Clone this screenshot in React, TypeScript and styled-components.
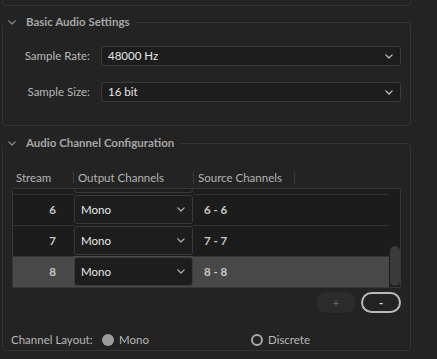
import React from 'react';
import styled, { createGlobalStyle } from 'styled-components';

const GlobalStyle = createGlobalStyle`
  html, body { margin: 0; padding: 0; background: #232323; }
  body {
    font-family: Lato, "Open Sans", "Liberation Sans", sans-serif;
    font-size: 11.5px;
    line-height: 16px;
    color: #b8b8b8;
    overflow: hidden;
  }
  * { box-sizing: border-box; }
`;

const Page = styled.div`
  width: 437px;
  height: 359px;
  overflow: hidden;
  background: #232323;
  padding-left: 2px;
`;

const Column = styled.div`
  width: 409px;
  display: flex;
  flex-direction: column;
`;

const PrevPanelEnd = styled.div`
  height: 6px;
  border: 1px solid #343434;
  border-top: none;
  border-radius: 0 0 4px 4px;
`;

const Section = styled.fieldset<{ $gap: number }>`
  margin: ${(p) => p.$gap}px 0 0;
  padding: 0;
  min-width: 0;
  border: 1px solid #343434;
  border-radius: 4px;
`;

const Legend = styled.legend`
  display: flex;
  align-items: center;
  gap: 10px;
  height: 16px;
  padding: 0 6px 0 5px;
  margin: 0;
  color: #a6a6a6;
  font-weight: 700;
`;

const Chevron = ({ color = '#8c8c8c' }: { color?: string }) => (
  <svg width={8} height={5} viewBox="0 0 8 5" fill="none">
    <path d="M0.8 0.8 L4 4 L7.2 0.8" stroke={color} strokeWidth="1.2" strokeLinecap="round" strokeLinejoin="round" />
  </svg>
);

const SettingsBody = styled.div`
  display: grid;
  grid-template-columns: 78px 300px;
  column-gap: 11px;
  row-gap: 16px;
  align-items: center;
  padding: 16px 9px 23px 9px;
`;

const FieldLabel = styled.span`
  text-align: right;
  color: #b8b8b8;
`;

const Select = styled.div<{ $h?: number }>`
  height: ${(p) => p.$h ?? 20}px;
  display: flex;
  align-items: center;
  justify-content: space-between;
  padding: 0 7px 0 6px;
  background: #1d1d1d;
  border: 1px solid #3a3a3a;
  border-radius: 3px;
  color: #e6e6e6;
`;

const SelectTail = styled.div`
  height: 4px;
  background: #1d1d1d;
  border: 1px solid #3a3a3a;
  border-top: none;
  border-radius: 0 0 3px 3px;
`;

const ChannelBody = styled.div`
  display: flex;
  flex-direction: column;
  padding: 17px 9px 0 9px;
`;

const HeaderRow = styled.div`
  display: flex;
  height: 20px;
`;

const HeaderCell = styled.div<{ $w: number }>`
  width: ${(p) => p.$w}px;
  display: flex;
  align-items: center;
  justify-content: space-between;
  padding-left: 4px;
  color: #b3b3b3;
  white-space: nowrap;
`;

const HeaderSep = styled.span`
  width: 1px;
  height: 12px;
  background: #3a3a3a;
`;

const TableBody = styled.div`
  display: grid;
  grid-template-columns: 1fr 11px;
  height: 100px;
  background: #1c1c1c;
  border: 1px solid #383838;
  border-radius: 2px;
`;

const Viewport = styled.div`
  display: flex;
  flex-direction: column;
  justify-content: flex-end;
  overflow: hidden;
`;

const Row = styled.div<{ $selected?: boolean; $h?: number }>`
  flex: none;
  display: grid;
  grid-template-columns: 61px 119px 1fr;
  height: ${(p) => p.$h ?? 31}px;
  background: ${(p) => (p.$selected ? '#484848' : '#1c1c1c')};
`;

const StreamCell = styled.div`
  display: flex;
  align-items: center;
  justify-content: flex-end;
  padding-right: 18px;
  border-top: 1px solid #333;
  font-weight: 700;
  color: #c8c8c8;
`;

const OutputCell = styled.div`
  padding-top: 1px;
`;

const SourceCell = styled.div`
  display: flex;
  align-items: center;
  padding-left: 11px;
  border-top: 1px solid #333;
  font-weight: 700;
  color: #c8c8c8;
`;

const ScrollTrack = styled.div`
  display: flex;
  flex-direction: column;
  justify-content: flex-end;
  align-items: center;
  padding: 0 0 1px;
`;

const Thumb = styled.div<{ $size: number }>`
  width: 10px;
  height: ${(p) => p.$size}px;
  border-radius: 5px;
  background: #3a3a3a;
`;

const ButtonRow = styled.div`
  display: flex;
  justify-content: flex-end;
  gap: 5px;
  margin-top: 4px;
`;

const PillButton = styled.button<{ $outlined?: boolean }>`
  width: 40px;
  height: 21px;
  border-radius: 11px;
  padding: 0;
  font-family: inherit;
  font-size: 11px;
  font-weight: 700;
  line-height: 1;
  background: ${(p) => (p.$outlined ? 'transparent' : '#2b2b2b')};
  border: ${(p) => (p.$outlined ? '2px solid #b9b9b9' : 'none')};
  color: ${(p) => (p.$outlined ? '#e6e6e6' : '#5c5c5c')};
`;

const LayoutRow = styled.div`
  display: grid;
  grid-template-columns: 91px 149px 1fr;
  align-items: center;
  height: 20px;
  margin-top: 17px;
  margin-left: -1px;
`;

const Option = styled.label`
  display: flex;
  align-items: center;
  gap: 5px;
  color: #b8b8b8;
`;

const Radio = styled.span<{ $checked?: boolean }>`
  width: 12px;
  height: 12px;
  border-radius: 50%;
  background: ${(p) => (p.$checked ? '#9c9c9c' : 'transparent')};
  border: ${(p) => (p.$checked ? 'none' : '2px solid #a8a8a8')};
`;

const ROW_H = 31;
const VIEW_H = 98;
const TOTAL_STREAMS = 8;
const visibleStreams = [6, 7, 8];

export default function App() {
  const thumb = Math.round((VIEW_H * VIEW_H) / (TOTAL_STREAMS * ROW_H)) + 1;
  return (
    <Page>
      <GlobalStyle />
      <Column>
        <PrevPanelEnd />
        <Section $gap={8}>
          <Legend>
            <Chevron />
            <span>Basic Audio Settings</span>
          </Legend>
          <SettingsBody>
            <FieldLabel>Sample Rate:</FieldLabel>
            <Select>
              <span>48000 Hz</span>
              <Chevron color="#c4c4c4" />
            </Select>
            <FieldLabel>Sample Size:</FieldLabel>
            <Select>
              <span>16 bit</span>
              <Chevron color="#c4c4c4" />
            </Select>
          </SettingsBody>
        </Section>
        <Section $gap={9}>
          <Legend>
            <Chevron />
            <span>Audio Channel Configuration</span>
          </Legend>
          <ChannelBody>
            <HeaderRow>
              <HeaderCell $w={62}>
                <span>Stream</span>
                <HeaderSep />
              </HeaderCell>
              <HeaderCell $w={120}>
                <span>Output Channels</span>
                <HeaderSep />
              </HeaderCell>
              <HeaderCell $w={101}>
                <span>Source Channels</span>
                <HeaderSep />
              </HeaderCell>
            </HeaderRow>
            <TableBody>
              <Viewport>
                <Row $h={5}>
                  <span />
                  <SelectTail />
                  <span />
                </Row>
                {visibleStreams.map((n) => (
                  <Row key={n} $selected={n === 8}>
                    <StreamCell>{n}</StreamCell>
                    <OutputCell>
                      <Select $h={29}>
                        <span>Mono</span>
                        <Chevron color="#b4b4b4" />
                      </Select>
                    </OutputCell>
                    <SourceCell>
                      {n} - {n}
                    </SourceCell>
                  </Row>
                ))}
              </Viewport>
              <ScrollTrack>
                <Thumb $size={thumb} />
              </ScrollTrack>
            </TableBody>
            <ButtonRow>
              <PillButton disabled>+</PillButton>
              <PillButton $outlined>-</PillButton>
            </ButtonRow>
            <LayoutRow>
              <span>Channel Layout:</span>
              <Option>
                <Radio $checked />
                Mono
              </Option>
              <Option>
                <Radio />
                Discrete
              </Option>
            </LayoutRow>
          </ChannelBody>
        </Section>
      </Column>
    </Page>
  );
}
